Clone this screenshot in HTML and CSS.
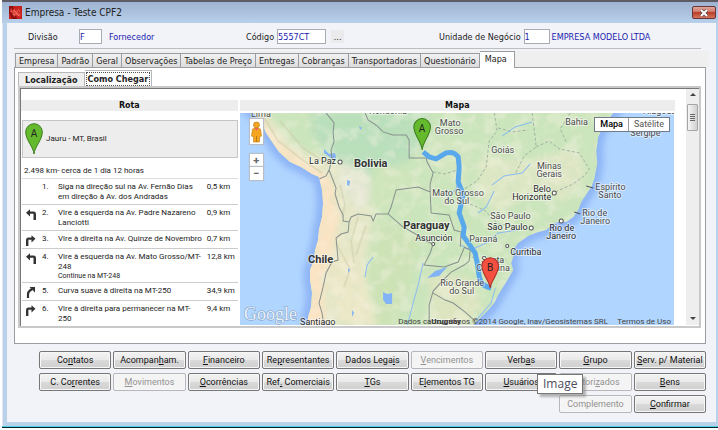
FILE: index.html
```html
<!DOCTYPE html>
<html lang="pt-BR">
<head>
<meta charset="utf-8">
<title>Empresa - Teste CPF2</title>
<link rel="stylesheet" href="styles.css">
</head>
<body>
<main class="window">
  <header class="titlebar">
    <svg class="app-icon" viewBox="0 0 13 13" aria-hidden="true">
      <rect width="13" height="13" fill="#c8201c"/>
      <path d="M0 0h4l4 13H3L0 7z" fill="#8e0f10"/>
      <path d="M2 2l2 3 1-3 2 4 1-3 2 5 2-1-1 4-4-2-2 2-1-4-3-1z" fill="#e2493d"/>
      <path d="M5 4l5 6M3 8l3 1M9 3l2 3" stroke="#f79a8c" stroke-width=".6" fill="none"/>
    </svg>
    <h1>Empresa - Teste CPF2</h1>
    <button class="close" aria-label="Fechar"><svg viewBox="0 0 10 8" aria-hidden="true"><path d="M2 1l6 6M8 1L2 7" stroke="#5c4a4a" stroke-width="3.4"/><path d="M2 1l6 6M8 1L2 7" stroke="#fff" stroke-width="2"/></svg></button>
  </header>
  <div class="client">
    <form class="record">
      <div class="field"><label class="wide" for="div">Divisão</label><input id="div" class="w-code" value="F"><output for="div" class="spaced">Fornecedor</output></div>
      <div class="field"><label for="cod">Código</label><input id="cod" class="w-id" value="5557CT"><button type="button" class="browse">...</button></div>
      <div class="field"><label for="uni">Unidade de Negócio</label><input id="uni" class="w-unit" value="1"><output for="uni">EMPRESA MODELO LTDA</output></div>
    </form>
    <nav class="tabs">
      <button>Empresa</button><button>Padrão</button><button>Geral</button><button>Observações</button><button>Tabelas de Preço</button><button>Entregas</button><button>Cobranças</button><button>Transportadoras</button><button>Questionário</button><button class="active">Mapa</button>
    </nav>
    <section class="panel">
      <nav class="subtabs"><button>Localização</button><button class="active"><span>Como Chegar</span></button></nav>
      <div class="viewer">
        <div class="document">
          <section class="route">
            <h2>Rota</h2>
            <div class="origin">
              <svg class="pin" viewBox="0 0 18 32" aria-hidden="true"><path d="M9 31C8.500 24 .7 17 .7 9a8.300 8.300 0 0 1 16.600 0C17.300 17 9.500 24 9 31z" fill="#65b92d" stroke="#3b7d1d"/><text x="9" y="14" class="pin-letter">A</text></svg>
              <span>Jauru - MT, Brasil</span>
            </div>
            <p class="summary">2.498 km- cerca de 1 dia 12 horas</p>
            <table class="steps">
              <tr><td class="turn"></td><td class="num">1.</td><td>Siga na direção sul na Av. Fernão Dias<br>em direção à Av. dos Andradas</td><td class="dist">0,5 km</td></tr>
              <tr><td class="turn"><svg viewBox="0 0 12 12"><use href="#left"/></svg></td><td class="num">2.</td><td>Vire à esquerda na Av. Padre Nazareno<br>Lanciotti</td><td class="dist">0,9 km</td></tr>
              <tr><td class="turn"><svg viewBox="0 0 12 12"><use href="#right"/></svg></td><td class="num">3.</td><td>Vire à direita na Av. Quinze de Novembro</td><td class="dist">0,7 km</td></tr>
              <tr><td class="turn"><svg viewBox="0 0 12 12"><use href="#left"/></svg></td><td class="num">4.</td><td>Vire à esquerda na Av. Mato Grosso/MT-<br>248<small>Continue na MT-248</small></td><td class="dist">12,8 km</td></tr>
              <tr><td class="turn"><svg viewBox="0 0 12 12"><path d="M3 12V8.500Q3 6 5 4.500L7 3" fill="none" stroke="#333" stroke-width="2.200"/><path d="M4.500 1H10v5.500z" fill="#333"/></svg></td><td class="num">5.</td><td>Curva suave à direita na MT-250</td><td class="dist">34,9 km</td></tr>
              <tr><td class="turn"><svg viewBox="0 0 12 12"><use href="#right"/></svg></td><td class="num">6.</td><td>Vire à direita para permanecer na MT-<br>250</td><td class="dist">9,4 km</td></tr>
            </table>
          </section>
          <section class="map">
            <h2>Mapa</h2>
            <div class="canvas">
              <svg class="drawing" viewBox="0 0 434 213" preserveAspectRatio="xMidYMid slice">
                <defs>
                  <path id="left" d="M8.500 12V5.800H5V8.500L1 4.800 5 1.200v2.400H8.500Q11 3.600 11 6v6z" fill="#333"/>
                  <path id="right" d="M1 12V6Q1 3.600 3.500 3.600H6.500V1.200L10.500 4.800 6.500 8.500V5.800H3.400V12z" fill="#333"/>
                  <clipPath id="landclip"><path id="landshape" d="M13 0L21 7 26 20 39 39 50 49 61 54 72 61 79 64 82 77 83 90 82 104 79 116 78 127 75 137 74 147 70 157 70 167 72 180 71 194 68 204 68 213H232L240 205 248 197 254 190 258 182 266 169 273 157 271 150 273 144 273 137 278 130 288 123 298 119 306 117 312 111 318 109 326 109 333 104 338 97 341 89 351 74 354 66 357 50 356 38 358 24 363 13 373 0z"/></clipPath>
                  <filter id="soft" x="-20%" y="-20%" width="140%" height="140%"><feGaussianBlur stdDeviation="3"/></filter>
                  <filter id="relief" x="0" y="0" width="100%" height="100%"><feTurbulence type="fractalNoise" baseFrequency=".09" numOctaves="3" seed="8"/><feColorMatrix values="0 0 0 0 .62  0 0 0 0 .76  0 0 0 0 .53  0 4 0 0 -1.9"/></filter>
                  <filter id="sand" x="0" y="0" width="100%" height="100%"><feTurbulence type="fractalNoise" baseFrequency=".07" numOctaves="3" seed="3"/><feColorMatrix values="0 0 0 0 .95  0 0 0 0 .91  0 0 0 0 .79  0 4 0 0 -1.8"/></filter>
                </defs>
                <rect width="434" height="213" fill="#b0d5ff"/>
                <g filter="url(#soft)"><use href="#landshape" fill="none" stroke="#8fb5f6" stroke-width="13"/></g>
                <use href="#landshape" fill="#cbe5bc"/>
                <g clip-path="url(#landclip)">
                  <g filter="url(#soft)">
                    <path d="M70 0h118v20l-18 26-40 20-40-16-18-30z" fill="#b9dfbb"/>
                    <path d="M10 0l20 4 25 30 40 14 30 10 10 40-10 60 10 55H60V60z" fill="#e5e7c7"/>
                    <path d="M10 0l14 4 14 24 25 19 26 17 10 30-2 30-10 30-4 30 3 30H60V64L8 10z" fill="#fbe4c4"/>
                    <path d="M100 48l26 10 8 30-16 8-18-22z" fill="#e5e7d4"/>
                    <path d="M96 136l24 14 18 63h-38l-10-50z" fill="#ece8c8"/>
                    <path d="M134 50l30 6 20 20-26 6-12 20-18-6z" fill="#cfe5bb"/>
                    <path d="M140 106l40 20-8 36-18 51h-16l-10-55z" fill="#cde3b6"/>
                    <path d="M183 24h30l20 20-6 30-26-10z" fill="#d2e6c0"/>
                    <path d="M240 42l50 6 10 30-44 22-20-20z" fill="#dde7c4"/>
                    <path d="M290 46l45-10 12 24-24 30-24-16z" fill="#dde6c4"/>
                    <path d="M188 160l42 4 12 30-20 19h-30z" fill="#dde5c0"/>
                  </g>
                  <rect width="434" height="213" filter="url(#relief)" opacity=".22"/>
                  <rect width="434" height="213" filter="url(#sand)" opacity=".32"/>
                  <path d="M24 4l14 24 26 20 18 12M40 8l22 26 26 18M100 72l5 20-3 12M118 104l-7 24 3 22M126 112l-10 30M96 130l14 26-6 18" fill="none" stroke="#c9c9a4" stroke-width="2" opacity=".4"/>
                  <path d="M84 36l5 5 6-1 1 5-4 1-8-6zM107 67l3 1-1 5-2-1zM143 179l4 2 5-1v11h-6l-3-4zM187 165l8-7 12-4-8 9zM108 155l2 2-2 3zM119 13l3 2-2 2zM112 197l2 3-2 4z" fill="#82b4f5"/>
                  <path d="M183 150l-5 22-5 18-6 23M221 132l6 4 8-1 11-5 12-10 20-3M254 78l-8 16-8 6M252 72l12-9 18-3 8-9M218 64l-2 12-10 10M262 23l13-9 17-5M133 144l-6 8-2 12M236 207l15-17 4-15" fill="none" stroke="#8bbcf1"/>
                  <path d="M292 0l4 34-12 9-9 18M296 34l13-6 10 8 20 4 10 16-4 6-12 9-16 7-10 10M193 59l12 2 12-4M254 0l3 18-8 10-3 26-9 14-13 8M258 15l14 4 16-2M230 91l14 6 14 14 18 2M232 144l14 6 20-4M330 0l-10 16 6 13" fill="none" stroke="#92a79b" stroke-dasharray="3 2" stroke-width=".8"/>
                  <path d="M86 0l8 10-1 10 1 9-3 8 1 10-3 10-3 6-7 3M89 57l7 18-1 6 4 13 4 8v6l6 1 2-5 7-3 7 1 6 1 2 5 3-7h12l15 13 16 9 7 5 7 3-3 9-6 12 20 2 14-5 6-14M109 109l-1 10-7 2-5 4 2 22-6 2-6 11-3 14-4 16 3 10 2 13M125 0l3 7 9 6 6 6 10 3h13l3 5v18h17l1 4 6 11-3 11v8l-12-5-22 3-5 17-3 7M190 79l1 21 18 2 5 15 7 2-1 15M224 134l6 3-1 11-5 4-13 7-8 8-10 11-4 14v19M193 180l12 7 8 3 12 9 10 9" fill="none" stroke="#87918e"/>
                </g>
                <path d="M183 39l6 5 7 2 10-6q8-2 12 4l1 10-1 15 5 12-2 10-2 9 5 14-1 9 6 8 6 9 2 10 2 13q1 10 12 12" fill="none" stroke="#5aa8ec" stroke-width="5" stroke-linejoin="round"/>
                <g class="labels">
                  <text x="11" y="4">Lima</text><text x="129" y="1">Rondônia</text>
                  <text x="210" y="13" text-anchor="middle">Mato</text><text x="209" y="21" text-anchor="middle">Grosso</text>
                  <text x="325" y="12">Bahia</text><text x="403" y="1">Alagoas</text><text x="390" y="23">Sergipe</text><text x="251" y="40">Goiás</text>
                  <text x="309" y="56" text-anchor="middle">Minas</text><text x="309" y="64" text-anchor="middle">Gerais</text>
                  <g class="city"><text x="69" y="51">La Paz</text><text x="293" y="79">Belo</text><text x="272" y="87">Horizonte</text><text x="247" y="117">São Paulo</text><text x="309" y="118">Rio de</text><text x="306" y="126">Janeiro</text><text x="270" y="142">Curitiba</text><text x="175" y="128">Asunción</text><text x="60" y="212">Santiago</text></g>
                  <text x="355" y="77">Espírito</text><text x="358" y="85">Santo</text>
                  <text x="192" y="83">Mato Grosso</text><text x="204" y="91">do Sul</text><text x="250" y="106">São Paulo</text><text x="342" y="103">Rio de</text><text x="340" y="111">Janeiro</text><text x="229" y="129">Paraná</text><text x="241" y="150">Santa</text><text x="236" y="158">Catarina</text><text x="200" y="173">Rio Grande</text><text x="209" y="181">do Sul</text>
                  <g class="country"><text x="114" y="54">Bolivia</text><text x="163" y="116">Paraguay</text><text x="68" y="150">Chile</text></g><text x="191" y="211" class="minor">Uruguay</text>
                </g>
                <path d="M346 73l7 2M334 99l6 2" stroke="#555" fill="none"/>
                <g fill="#fff" stroke="#555"><circle cx="100" cy="49" r="2"/><circle cx="314" cy="80" r="2"/><circle cx="291" cy="115" r="2"/><circle cx="321" cy="108" r="2"/><circle cx="267" cy="133" r="1.500"/><circle cx="193" cy="131" r="1.500"/></g>
                <g transform="translate(173 5)"><path d="M9 32C8.500 24 .7 17 .7 9a8.300 8.300 0 0 1 16.600 0C17.300 17 9.500 24 9 32z" fill="#65b92d" stroke="#3b7d1d"/><text x="9" y="14" class="pin-letter">A</text></g>
                <g transform="translate(241 144)"><path d="M9 31C8.500 24 .7 17 .7 9a8.300 8.300 0 0 1 16.600 0C17.300 17 9.500 24 9 31z" fill="#f35040" stroke="#aa2e26"/><text x="9" y="14" class="pin-letter">B</text></g>
                <text x="4" y="207" class="brand">Google</text>
                <g class="legal"><text x="158" y="211">Dados cartográficos ©2014 Google, Inav/Geosistemas SRL</text><text x="377" y="211">Termos de Uso</text></g>
              </svg>
              <div class="map-tools">
                <button class="person" aria-label="Street View"><svg viewBox="0 0 12 24" aria-hidden="true"><circle cx="6" cy="5" r="3" fill="#f5a51e" stroke="#ae7114" stroke-width=".6"/><path d="M2 9q4-2 8 0l1 7-2 1v5H3v-5l-2-1z" fill="#f5a51e" stroke="#bd7a14" stroke-width=".6"/><path d="M4 8l2 3 2-3z" fill="#ef6565"/><path d="M6 16v6" stroke="#bd7a14"/></svg></button>
                <div class="zoom"><button>+</button><button>−</button></div>
              </div>
              <div class="map-type"><button class="chosen">Mapa</button><button>Satélite</button></div>
            </div>
          </section>
        </div>
        <div class="scrollbar" aria-hidden="true"><span class="arrow up"></span><span class="thumb"><i></i></span><span class="arrow down"></span></div>
      </div>
    </section>
    <div class="actions">
      <button>Co<u>n</u>tatos</button><button>Acompan<u>h</u>am.</button><button><u>F</u>inanceiro</button><button>Re<u>p</u>resentantes</button><button>Dados Lega<u>i</u>s</button><button disabled><u>V</u>encimentos</button><button>Verb<u>a</u>s</button><button><u>G</u>rupo</button><button><u>S</u>erv. p/ Material</button>
      <button>C. Co<u>r</u>rentes</button><button disabled><u>M</u>ovimentos</button><button><u>O</u>corrências</button><button>Ref<u>.</u> Comerciais</button><button><u>T</u>Gs</button><button>E<u>l</u>ementos TG</button><div class="tipped"><button><u>U</u>suários</button><span class="tooltip" role="tooltip">Image</span></div><button disabled>Autori<u>z</u>ados</button><button><u>B</u>ens</button>
      <button class="col-8" disabled>Complemento</button><button><u>C</u>onfirmar</button>
    </div>
  </div>
</main>
</body>
</html>
```
FILE: styles.css
```css
* { box-sizing: border-box; }
body {
  margin: 0;
  background: #fff;
  color: #222;
  font: 9px/12px "DejaVu Sans Condensed", "DejaVu Sans", sans-serif;
}
button, input { font: inherit; color: inherit; margin: 0; padding: 0; border-radius: 0; }
h1, h2, p { margin: 0; font-weight: normal; }
svg { display: block; }

.window {
  margin-left: 2px;
  padding: 0 2px 5px 5px;
  border-top: 2px solid #5d5c65;
  border-bottom: 1px solid #06242b;
  background: #bad1ea;
  box-shadow: inset 0 -1px #4ed0e4, inset 1px 0 #dfe8f2;
}
.titlebar {
  display: flex;
  align-items: center;
  height: 21px;
  margin: 0 -2px 0 -5px;
  padding: 0 2px 0 7px;
  background: linear-gradient(#9db3d1, #b9d0ea);
}
.app-icon { width: 13px; height: 13px; }
.titlebar h1 { flex: 1; padding-left: 3px; font-size: 10px; }
.close {
  display: grid;
  place-items: center;
  width: 24px;
  height: 13px;
  border: 1px solid #69343a;
  border-radius: 2px;
  background: linear-gradient(#e1a698, #cf7869 45%, #b93f28 50%, #d4745b);
}
.close svg { width: 10px; height: 8px; }

.client { padding: 0 7px 9px; background: #f2f3f9; }
.record {
  display: grid;
  grid-template-columns: 218fr 193fr 262fr;
  height: 26px;
  margin-right: 8px;
  padding: 6px 0 0 14px;
  border-bottom: 1px solid #bcbdbd;
}
.field { display: flex; align-items: center; height: 15px; white-space: nowrap; }
.field label { margin-right: 3px; }
.field .wide { width: 48px; }
.field input {
  height: 15px;
  border: 1px solid #a5acb2;
  background: #fff;
  color: #1c1cb0;
}
.w-code { width: 23px; }
.w-id { width: 49px; }
.w-unit { width: 26px; }
.field output { margin-left: 2px; color: #1c1cb0; }
.field .spaced { margin-left: 7px; }
.browse { width: 13px; height: 13px; margin-left: 5px; border: 0; background: #ebebed; line-height: 12px; }

.tabs { display: flex; align-items: flex-end; height: 16px; margin: 2px 0 0; padding-left: 1px; background: #efefef; white-space: nowrap; }
.tabs button {
  flex: none;
  height: 14px;
  padding: 0 3px;
  border: 1px solid #9b9da3;
  border-left-width: 0;
  border-bottom-width: 0;
  background: linear-gradient(#f1f1f1, #dcdcdc);
}
.tabs button:first-child { border-left-width: 1px; }
.tabs .active { height: 17px; margin-bottom: -1px; padding: 0 7px 2px 5px; background: #fff; position: relative; }
.panel { margin-right: 3px; padding: 2px 4px 15px 3px; border: 1px solid #9b9da3; background: #fff; }
.subtabs { display: flex; align-items: flex-end; height: 16px; font-weight: bold; }
.subtabs button { height: 14px; padding: 0 6px; border: 1px solid #b8b8b8; border-bottom: 0; background: #eee; }
.subtabs .active { height: 16px; padding: 1px; border-left: 0; background: #fff; }
.subtabs span { display: block; padding: 0 1px; border: 1px dotted #555; line-height: 12px; }

.viewer {
  display: flex;
  height: 242px;
  border: 2px solid #c9c9c9;
  box-shadow: inset 1px 1px #777;
  padding: 1px 0 1px 1px;
}
.document {
  flex: 1;
  display: grid;
  grid-template-columns: 217fr 436fr;
  gap: 2px;
  padding: 11px 11px 0 0;
  overflow: hidden;
}
h2 { background: #ededed; font: bold 8px/11px "DejaVu Sans", sans-serif; text-align: center; color: #111; }
.route { font: 8px/10px Roboto, sans-serif; }
.origin {
  display: flex;
  align-items: center;
  gap: 3px;
  height: 38px;
  margin: 9px 0 0 1px;
  padding-left: 2px;
  border: 1px solid #c6c6c6;
  background: #ededed;
}
.pin { width: 18px; height: 32px; }
.pin-letter { font: 10px Roboto, sans-serif; text-anchor: middle; fill: #222; }
.summary { margin: 8px 0 0 1px; padding: 0 2px 2px; border-bottom: 1px solid #ddd; }
.steps { width: calc(100% - 1px); margin-left: 1px; border-collapse: collapse; white-space: nowrap; }
.steps td { padding: 3px 0 2px; border-bottom: 1px solid #ccc; vertical-align: top; }
.steps tr:last-child td { border-bottom: 0; }
.steps small { display: block; font-size: 7px; line-height: 8px; }
.turn { width: 20px; }
.turn svg { width: 12px; height: 12px; margin-left: 3px; }
.num { width: 16px; }
.dist { width: 31px; }

.canvas { position: relative; height: 214px; margin: 2px 1px 0 0; overflow: hidden; }
.drawing { width: 100%; height: 213px; }
.labels { font: 9px Roboto, sans-serif; fill: #4c4c4c; stroke: #fff; stroke-width: 2px; stroke-opacity: .5; stroke-linejoin: round; paint-order: stroke; }
.city { fill: #2a2a2a; }
.country { font-size: 11px; font-weight: bold; fill: #333; }
.minor { font-size: 8px; font-weight: bold; fill: #333; }
.brand { font: 18px "Liberation Serif", serif; fill: #e9f2fb; stroke: #7f9bbd; stroke-width: 1px; paint-order: stroke; }
.legal { font: 8px Roboto, sans-serif; fill: #444; }
.map-tools { position: absolute; top: 6px; left: 10px; width: 13px; }
.map-tools button { display: block; width: 13px; border: 0; background: #fff; box-shadow: 0 0 1px 1px #b7bec6; }
.map-tools .person { height: 25px; }
.person svg { width: 13px; height: 24px; }
.zoom { margin-top: 10px; }
.zoom button { height: 13px; font: bold 11px/12px Roboto, sans-serif; color: #666; }
.map-type { position: absolute; top: 4px; right: 4px; display: flex; height: 15px; border: 1px solid #717b87; background: #fff; }
.map-type button { padding: 0 5px; border: 0; background: #fff; color: #555; font: 9px/13px Roboto, sans-serif; }
.map-type .chosen { border-right: 1px solid #999; color: #000; font-weight: 500; }

.scrollbar { display: flex; flex-direction: column; align-items: center; width: 13px; background: #eee; }
.arrow { border: 3px solid transparent; }
.up { margin: 4px 0 5px; border-top: 0; border-bottom-color: #444; }
.down { margin: auto 0 5px; border-bottom: 0; border-top-color: #444; }
.thumb { display: grid; place-items: center; width: 11px; height: 27px; margin-top: 3px; border: 1px solid #a5a5a5; border-radius: 1px; background: linear-gradient(90deg, #f5f5f5, #d0d0d0); }
.thumb i { width: 5px; height: 7px; background: repeating-linear-gradient(#666 0 1px, transparent 1px 2px); }

.actions { display: grid; grid-template-columns: repeat(9, minmax(0, 1fr)); gap: 4px 2px; padding: 7px 3px 0 25px; }
.actions button {
  width: 100%;
  height: 18px;
  border: 1px solid #777;
  border-radius: 2px;
  background: linear-gradient(#f3f3f3, #e9e9e9 50%, #dadada 52%, #cfcfcf);
  box-shadow: inset 0 0 0 1px #f7f7f7;
  color: #111;
  font: 9px/16px Roboto, sans-serif;
  white-space: nowrap;
}
.actions button:disabled { border-color: #b5b7bb; background: #f4f4f4; color: #929292; }
.actions .col-8 { grid-column: 8; }
.tipped { position: relative; }
.tooltip {
  position: absolute;
  z-index: 1;
  top: 1px;
  left: 52px;
  height: 20px;
  padding: 0 5px;
  border: 1px solid #767676;
  background: #fff;
  box-shadow: 3px 3px 2px #8889;
  color: #4c4c60;
  font: 12px/18px "Open Sans", sans-serif;
}
```
